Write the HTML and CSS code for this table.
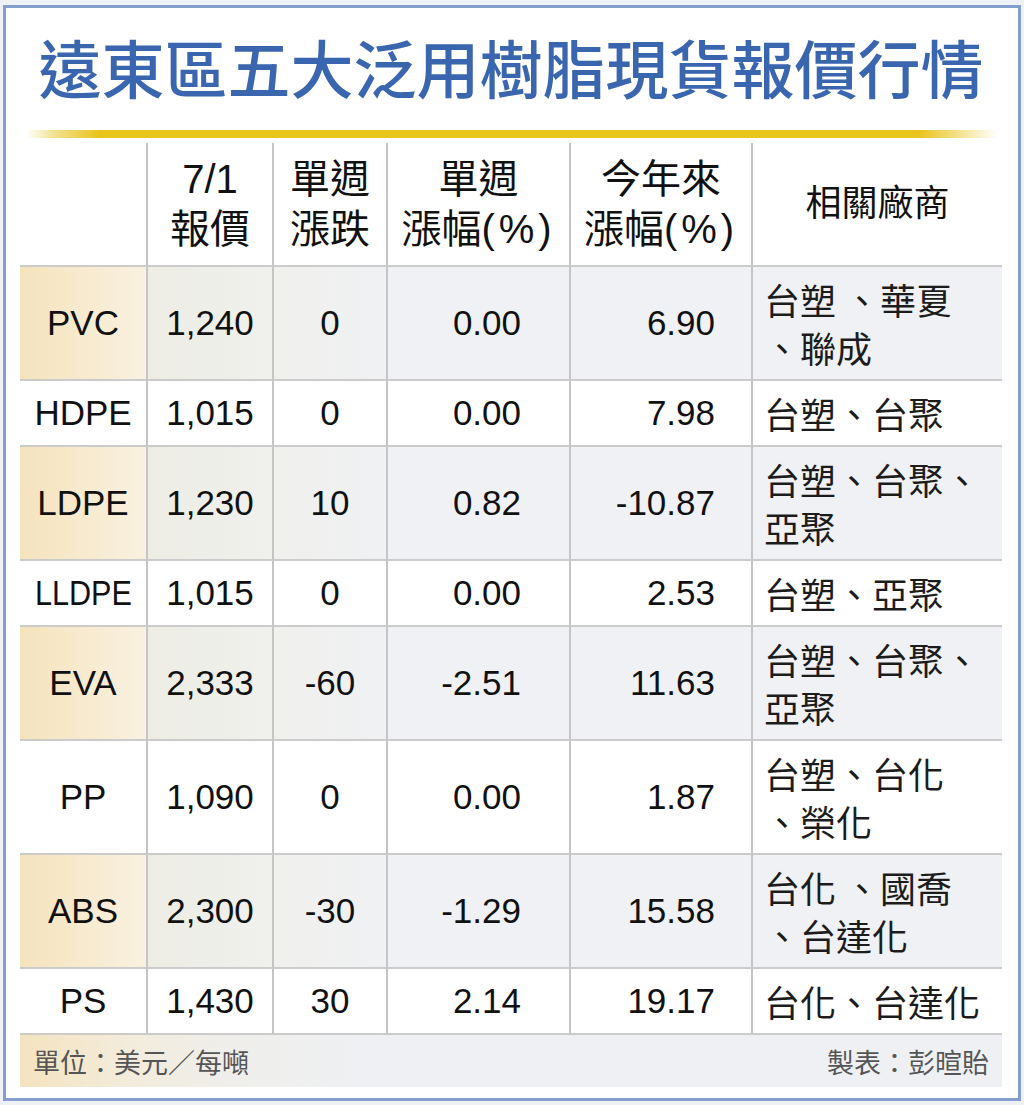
FILE: index.html
```html
<!DOCTYPE html>
<html lang="zh-Hant">
<head>
<meta charset="utf-8">
<title>遠東區五大泛用樹脂現貨報價行情</title>
<link rel="stylesheet" href="styles.css">
</head>
<body>
<div class="panel">
  <h1 class="title">遠東區五大泛用樹脂現貨報價行情</h1>
  <div class="rule"></div>
  <table class="quotes">
    <thead>
      <tr>
        <th class="c1"></th>
        <th class="c2">7/1<br>報價</th>
        <th class="c3">單週<br>漲跌</th>
        <th class="c4">單週<br>漲幅<span class="pct">(%)</span></th>
        <th class="c5">今年來<br>漲幅<span class="pct">(%)</span></th>
        <th class="c6 small">相關廠商</th>
      </tr>
    </thead>
    <tbody>
      <tr class="shade">
        <td class="name">PVC</td><td class="price">1,240</td><td class="chg">0</td><td class="wk">0.00</td><td class="ytd">6.90</td><td class="vendor">台塑 、華夏<br>、聯成</td>
      </tr>
      <tr>
        <td class="name">HDPE</td><td class="price">1,015</td><td class="chg">0</td><td class="wk">0.00</td><td class="ytd">7.98</td><td class="vendor">台塑、台聚</td>
      </tr>
      <tr class="shade">
        <td class="name">LDPE</td><td class="price">1,230</td><td class="chg">10</td><td class="wk">0.82</td><td class="ytd">-10.87</td><td class="vendor">台塑、台聚、<br>亞聚</td>
      </tr>
      <tr>
        <td class="name"><span class="cond">LLDPE</span></td><td class="price">1,015</td><td class="chg">0</td><td class="wk">0.00</td><td class="ytd">2.53</td><td class="vendor">台塑、亞聚</td>
      </tr>
      <tr class="shade">
        <td class="name">EVA</td><td class="price">2,333</td><td class="chg">-60</td><td class="wk">-2.51</td><td class="ytd">11.63</td><td class="vendor">台塑、台聚、<br>亞聚</td>
      </tr>
      <tr>
        <td class="name">PP</td><td class="price">1,090</td><td class="chg">0</td><td class="wk">0.00</td><td class="ytd">1.87</td><td class="vendor">台塑、台化<br>、榮化</td>
      </tr>
      <tr class="shade">
        <td class="name">ABS</td><td class="price">2,300</td><td class="chg">-30</td><td class="wk">-1.29</td><td class="ytd">15.58</td><td class="vendor">台化 、國喬<br>、台達化</td>
      </tr>
      <tr>
        <td class="name">PS</td><td class="price">1,430</td><td class="chg">30</td><td class="wk">2.14</td><td class="ytd">19.17</td><td class="vendor">台化、台達化</td>
      </tr>
    </tbody>
  </table>
  <div class="foot">
    <span>單位：美元／每噸</span>
    <span>製表：彭暄貽</span>
  </div>
</div>
</body>
</html>
```
FILE: styles.css
```css
html, body {
  margin: 0;
  padding: 0;
}
body {
  background: #eef1f6;
  font-family: "Liberation Sans", "Noto Sans CJK TC", sans-serif;
  color: #111;
}
.panel {
  margin: 5px 0 0 3px;
  width: 1018px;
  box-sizing: border-box;
  border: 3px solid #849ecd;
  background: #fff;
  padding: 0 16px 11px 14px;
}
.title {
  margin: 0;
  padding-top: 26px;
  height: 64px;
  font-family: "Noto Sans CJK TC", sans-serif;
  font-size: 63px;
  line-height: 64px;
  font-weight: 500;
  color: #3a66b0;
  text-align: center;
  white-space: nowrap;
}
.rule {
  margin: 32px 4px 0 6px;
  height: 8px;
  background: linear-gradient(90deg, rgba(233,197,28,0) 0%, #f2e08e 3%, #e9c51c 7.5%, #e9c51c 92%, rgba(233,197,28,0) 100%);
}
.quotes {
  margin-top: 5px;
  width: 982px;
  table-layout: fixed;
  border-collapse: separate;
  border-spacing: 0;
}
.quotes th,
.quotes td {
  box-sizing: border-box;
  border-right: 2px solid #c5c5c5;
  border-bottom: 2px solid #cbcbcb;
  text-align: center;
  vertical-align: middle;
  white-space: nowrap;
}
.quotes th:last-child,
.quotes td:last-child {
  border-right: none;
}
.quotes th {
  font-weight: normal;
  font-size: 40px;
  line-height: 50px;
  padding: 11px 0;
  color: #111;
}
.quotes th.small {
  font-size: 36px;
}
.pct {
  letter-spacing: 4px;
}
.c1 { width: 128px; }
.c2 { width: 126px; }
.c3 { width: 114px; }
.c4 { width: 183px; }
.c5 { width: 182px; }
.c6 { width: 249px; }
.quotes td {
  font-size: 35px;
  line-height: 48px;
  padding: 8px 0;
  color: #111;
}
.quotes td.wk {
  text-align: right;
  padding-right: 48px;
}
.quotes td.ytd {
  text-align: right;
  padding-right: 36px;
}
.quotes td.vendor {
  text-align: left;
  padding-left: 11px;
  font-family: "Noto Sans CJK TC", sans-serif;
  font-size: 36px;
  font-weight: 400;
  color: #1c1c1c;
}
.cond {
  display: inline-block;
  transform: scaleX(0.875);
}
.shade td {
  background: #eff1f4;
}
.shade td.name {
  background: linear-gradient(90deg, #f5e3bc 0%, #f9f1e1 100%);
}
.shade td.price {
  background: linear-gradient(90deg, #edede5 0%, #f0f0ed 100%);
}
.shade td.chg {
  background: linear-gradient(90deg, #f0f0ed 0%, #eff1f3 100%);
}
.foot {
  height: 52px;
  box-sizing: border-box;
  padding: 0 13px;
  display: flex;
  justify-content: space-between;
  align-items: center;
  font-family: "Noto Sans CJK TC", sans-serif;
  font-size: 27px;
  color: #555;
  background: linear-gradient(90deg, #f4e3bf 0px, #f3ecdc 110px, #efeeea 200px, #eef0f4 360px, #eef0f4 100%);
}
```
